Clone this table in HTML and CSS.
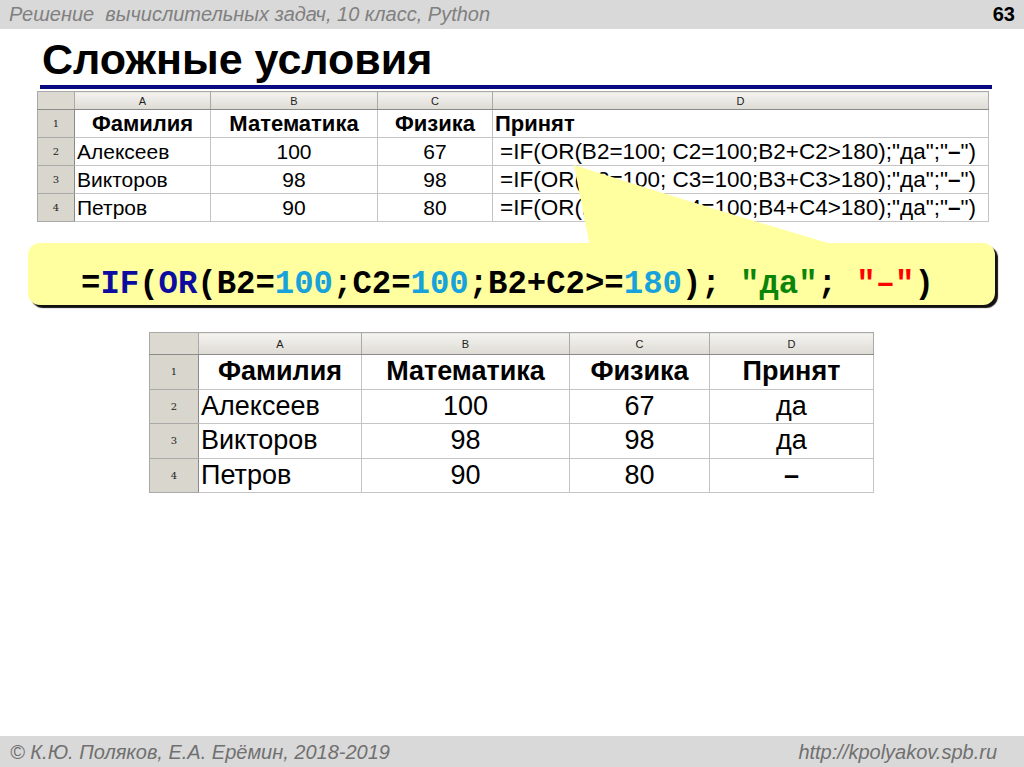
FILE: index.html
```html
<!DOCTYPE html>
<html lang="ru">
<head>
<meta charset="utf-8">
<title>Сложные условия</title>
<link rel="stylesheet" href="styles.css">
</head>
<body>
<div class="page">
  <header class="topbar">
    <span class="course">Решение&nbsp; вычислительных задач, 10 класс, Python</span>
    <span class="pageno">63</span>
  </header>

  <main class="content">
    <h1 class="title">Сложные условия</h1>
    <div class="rule"></div>

    <table class="sheet sheet-top">
      <colgroup>
        <col class="c-rh-top"><col class="c-a-top"><col class="c-b-top"><col class="c-c-top"><col class="c-d-top">
      </colgroup>
      <tr class="hdr">
        <td class="corner"></td><td class="ch">A</td><td class="ch">B</td><td class="ch">C</td><td class="ch">D</td>
      </tr>
      <tr>
        <td class="rh">1</td><td class="b ctr">Фамилия</td><td class="b ctr">Математика</td><td class="b ctr">Физика</td><td class="b">Принят</td>
      </tr>
      <tr>
        <td class="rh">2</td><td>Алексеев</td><td class="ctr">100</td><td class="ctr">67</td><td class="f">=IF(OR(B2=100; C2=100;B2+C2&gt;180);"да";"<b>–</b>")</td>
      </tr>
      <tr>
        <td class="rh">3</td><td>Викторов</td><td class="ctr">98</td><td class="ctr">98</td><td class="f">=IF(OR(B3=100; C3=100;B3+C3&gt;180);"да";"<b>–</b>")</td>
      </tr>
      <tr>
        <td class="rh">4</td><td>Петров</td><td class="ctr">90</td><td class="ctr">80</td><td class="f">=IF(OR(B4=100; C4=100;B4+C4&gt;180);"да";"<b>–</b>")</td>
      </tr>
    </table>

    <div class="callout">
      <code class="code">=<span class="kw">IF</span>(<span class="kw">OR</span>(B2=<span class="num">100</span>;C2=<span class="num">100</span>;B2+C2&gt;=<span class="num">180</span>); <span class="str">"да"</span>; <span class="red">"–"</span>)</code>
    </div>

    <table class="sheet sheet-bottom">
      <colgroup>
        <col class="c-rh-bot"><col class="c-a-bot"><col class="c-b-bot"><col class="c-c-bot"><col class="c-d-bot">
      </colgroup>
      <tr class="hdr">
        <td class="corner"></td><td class="ch">A</td><td class="ch">B</td><td class="ch">C</td><td class="ch">D</td>
      </tr>
      <tr>
        <td class="rh">1</td><td class="b ctr">Фамилия</td><td class="b ctr">Математика</td><td class="b ctr">Физика</td><td class="b ctr">Принят</td>
      </tr>
      <tr>
        <td class="rh">2</td><td>Алексеев</td><td class="ctr">100</td><td class="ctr">67</td><td class="ctr">да</td>
      </tr>
      <tr>
        <td class="rh">3</td><td>Викторов</td><td class="ctr">98</td><td class="ctr">98</td><td class="ctr">да</td>
      </tr>
      <tr>
        <td class="rh">4</td><td>Петров</td><td class="ctr">90</td><td class="ctr">80</td><td class="ctr b">–</td>
      </tr>
    </table>
  </main>

  <footer class="bottombar">
    <span>© К.Ю. Поляков, Е.А. Ерёмин, 2018-2019</span>
    <span>http://kpolyakov.spb.ru</span>
  </footer>

  <svg class="pointer" width="1024" height="767" viewBox="0 0 1024 767" aria-hidden="true">
    <path d="M574,165 Q715,210 845,248 L845,252 L591,252 Z" fill="#ffff9f"/>
  </svg>
</div>
</body>
</html>
```

FILE: styles.css
```css
* { box-sizing: border-box; }

html, body {
  margin: 0;
  padding: 0;
  background: #ffffff;
}

.page {
  position: relative;
  width: 1024px;
  height: 767px;
  display: flex;
  flex-direction: column;
  overflow: hidden;
  font-family: "Liberation Sans", Arial, sans-serif;
  background: #ffffff;
}

.topbar {
  height: 29px;
  flex: 0 0 29px;
  background: #d9d9d9;
  display: flex;
  justify-content: space-between;
  align-items: center;
  padding: 0 9px 0 9px;
  font-size: 20px;
  line-height: 29px;
}

.course {
  font-style: italic;
  color: #808080;
}

.pageno {
  font-weight: bold;
  color: #000;
}

.content {
  flex: 1 1 auto;
  display: flex;
  flex-direction: column;
  align-items: flex-start;
}

.title {
  margin: 10px 0 0 42px;
  font-size: 43px;
  line-height: 40px;
  height: 40px;
  font-weight: bold;
  color: #000;
}

.rule {
  margin: 6px 0 0 40px;
  width: 952px;
  height: 4px;
  background: #0a0a80;
}

.sheet {
  border-collapse: collapse;
  table-layout: fixed;
  color: #000;
  font-family: "Liberation Sans", Arial, sans-serif;
  border-top: 1px solid #888;
  border-left: 1px solid #666;
}

.sheet td {
  border: 1px solid #c4c4c4;
  padding: 0 2px;
  white-space: nowrap;
  overflow: hidden;
  vertical-align: middle;
}

.sheet .ch {
  background: linear-gradient(#f4f3f0, #dedbd4);
  border-color: #a9a9a9;
  border-bottom-color: #8a8a8a;
  font-size: 11px;
  color: #222;
  text-align: center;
  padding: 0;
}

.sheet .corner {
  background: #dcd9d1;
  border-color: #a9a9a9;
  border-bottom-color: #8a8a8a;
}

.sheet .rh {
  background: #d9d6ce;
  border-color: #a9a9a9;
  border-right-color: #8a8a8a;
  font-family: "DejaVu Serif", "Liberation Serif", serif;
  font-size: 10px;
  color: #222;
  text-align: center;
  padding: 0;
}

.sheet .b { font-weight: bold; }
.sheet .ctr { text-align: center; }

/* top spreadsheet */
.sheet-top {
  margin: 2px 0 0 37px;
  width: 951px;
  font-size: 21px;
}
.c-rh-top { width: 37px; }
.c-a-top { width: 136px; }
.c-b-top { width: 167px; }
.c-c-top { width: 115px; }
.c-d-top { width: 496px; }
.sheet-top tr { height: 28px; }
.sheet-top .hdr { height: 18px; }
.sheet-top .hdr td { height: 18px; }
.sheet-top .b { font-size: 22px; }
.sheet-top .f { padding-left: 7px; font-size: 22.5px; }
.sheet-top .f b { font-weight: bold; }

/* callout */
.callout {
  margin: 21px 0 0 28px;
  width: 967px;
  height: 62px;
  background: #ffff9f;
  border-radius: 12px;
  box-shadow: 3px 3px 1px #111;
  padding: 22px 0 0 53px;
}

.code {
  font-family: "Liberation Mono", "Courier New", monospace;
  font-weight: bold;
  font-size: 32.3px;
  line-height: 40px;
  color: #000;
  white-space: pre;
}
.code .kw { color: #0c0ca0; }
.code .num { color: #18a2dc; }
.code .str { color: #0a850a; }
.code .red { color: #ff0000; }

/* bottom spreadsheet */
.sheet-bottom {
  margin: 27px 0 0 149px;
  width: 724px;
  font-size: 27px;
}
.c-rh-bot { width: 49px; }
.c-a-bot { width: 163px; }
.c-b-bot { width: 208px; }
.c-c-bot { width: 140px; }
.c-d-bot { width: 164px; }
.sheet-bottom .hdr { height: 22px; }
.sheet-bottom .hdr td { height: 22px; }
.sheet-bottom tr { height: 34.5px; }

.bottombar {
  height: 31px;
  flex: 0 0 31px;
  background: #d9d9d9;
  display: flex;
  justify-content: space-between;
  align-items: center;
  padding: 2px 27px 0 10px;
  font-size: 20px;
  line-height: 29px;
  font-style: italic;
  color: #707070;
}

.pointer {
  position: absolute;
  left: 0;
  top: 0;
  pointer-events: none;
}
```
